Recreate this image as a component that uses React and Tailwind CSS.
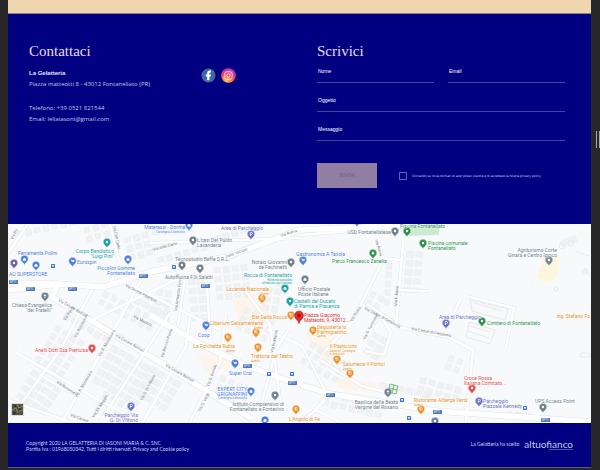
import React from "react";

const BLUE = "#4d7fe0";
const ORANGE = "#e8912a";
const GREEN = "#2b934a";
const TEAL = "#1aa3a3";
const GRAY = "#6f828c";
const PURPLE = "#6a74c4";
const RED = "#e2504f";

const pins = [
  [24.5, 260, BLUE, "bag"], [14, 264, "#6b62a8", "dot"], [36, 266, BLUE, "bag"], [72.5, 262, BLUE, "cart"],
  [107, 243, TEAL, "dot"], [128, 260, BLUE, "bag"], [45, 297, GRAY, "cross"], [189, 226, BLUE, "bag"],
  [251, 235, PURPLE, "p"], [193, 241, GRAY, "dot"], [182, 266, GRAY, "dot"], [200, 269, GRAY, "dot"],
  [291, 263, GRAY, "dot"], [285, 289, TEAL, "bag"], [262, 299, ORANGE, "fork"], [290, 302, TEAL, "dot"],
  [291, 316, ORANGE, "fork"], [256, 333, ORANGE, "fork"], [206, 326, BLUE, "cart"], [357, 222, PURPLE, "p"],
  [395, 232, GRAY, "dot"], [407, 232, GREEN, "dot"], [423, 244, GREEN, "dot"], [303, 261, BLUE, "cart"],
  [373, 254, GREEN, "tree"], [305, 280, GRAY, "bag"], [446, 324, PURPLE, "p"], [549, 261, GRAY, "dot"],
  [482, 322, GREEN, "dot"], [92, 349, RED, "dot"], [131, 407, PURPLE, "p"], [228, 338, ORANGE, "fork"],
  [258, 348, ORANGE, "fork"], [235, 364, BLUE, "cart"], [251, 392, BLUE, "bag"], [275, 396, GRAY, "dot"],
  [296, 410, ORANGE, "fork"], [265, 421, BLUE, "bag"], [313, 331, ORANGE, "fork"], [337, 360, ORANGE, "fork"],
  [350, 374, ORANGE, "fork"], [388, 393, GRAY, "cross"], [421, 410, ORANGE, "fork"], [435, 422, GRAY, "dot"],
  [472, 389, RED, "dot"], [479, 402, PURPLE, "p"], [543, 408, GRAY, "dot"],
];

// x, y, anchor, colour, lines, small lines
const places = [
  [18, 255, "start", BLUE, ["Ferramenta Polini"]],
  [9, 276, "start", BLUE, ["AO SUPERSTORE"]],
  [77, 264, "start", BLUE, ["Eurospin"]],
  [114, 253, "end", TEAL, ["Corpo Bandistico", "\"Luigi Pini\""]],
  [135, 270, "end", BLUE, ["Piccolini Gomme", "Fontanellato"]],
  [52, 307, "end", GRAY, ["Chiesa Evangelica", "\"dei Fratelli\""]],
  [185, 229, "end", BLUE, ["Materassi - Dorma"], ["Consegna a domicilio"]],
  [221, 230, "start", PURPLE, ["Area di Parcheggio"]],
  [197, 242, "start", GRAY, ["L'oasi Del Pulito", "Lavanderia"]],
  [175, 261, "start", GRAY, ["Tecnostudio Beffe S.R.L."]],
  [165, 279, "start", GRAY, ["Autofficina F.lli Saletti"]],
  [287, 264, "end", GRAY, ["Notaio Giovanni", "de Fachinetti"]],
  [292, 277, "end", TEAL, ["Rocca di Fontanellato"], ["Fortezza custodita", "affrescata con fossato"]],
  [269, 291, "end", ORANGE, ["Locanda Nazionale"], ["Aperto"]],
  [294, 303, "start", TEAL, ["Castelli del Ducato", "di Parma e Piacenza"]],
  [287, 319, "end", ORANGE, ["Bar Della Rocca"]],
  [304, 317, "start", "#d92b2b", ["Piazza Giacomo", "Matteotti, 9, 43012..."]],
  [263, 325, "end", ORANGE, ["Cibarium Salsamenteria"], ["Aperto"]],
  [198, 337, "start", BLUE, ["Coop"]],
  [391, 234, "end", GRAY, ["USD Fontanellatese"]],
  [400, 228, "start", GREEN, ["Piscina Fontanellato"]],
  [428, 245, "start", GREEN, ["Piscina comunale", "Fontanellato"]],
  [296, 256, "start", BLUE, ["Gastronomia A Tavola"]],
  [332, 263, "start", GREEN, ["Parco Francesco Zanella"]],
  [298, 291, "start", GRAY, ["Ufficio Postale", "Poste Italiane"]],
  [439, 319, "start", PURPLE, ["Area di Parcheggio"]],
  [557, 252, "end", GRAY, ["Agriturismo Corte", "Ginara e Centro Ippico"]],
  [487, 325, "start", GREEN, ["Cimitero di Fontanellato"]],
  [590, 318, "end", ORANGE, ["Ing. Stefano Fo"]],
  [88, 352, "end", RED, ["Anelli Dott.Ssa Pierluisa"]],
  [138, 417, "end", PURPLE, ["Parcheggio Via", "G. Di Vittorio"]],
  [235, 348, "end", ORANGE, ["La Forchetta Rubia"], ["Aperto"]],
  [251, 358, "start", ORANGE, ["Trattoria del Teatro"], ["Aperto"]],
  [229, 375, "start", BLUE, ["Super Crai"]],
  [247, 391, "end", BLUE, ["EXPERT CITY", "GRIGNAFFINI"], ["Consegna a domicilio"]],
  [284, 406, "end", GRAY, ["Istituto Comprensivo di", "Fontanellato e Fontevivo"]],
  [289, 421, "start", ORANGE, ["L'Angolo di Fe"]],
  [317, 329, "start", ORANGE, ["Degusteria lo", "Parmigianino"], ["Aperto"]],
  [330, 348, "start", ORANGE, ["Il Pasticcino"], ["Asporto, Consegna", "a domicilio"]],
  [343, 366, "start", ORANGE, ["Salumeria Il Portici"], ["Aperto"]],
  [398, 404, "end", GRAY, ["Basilica della Beata", "Vergine del Rosario"]],
  [414, 402, "start", ORANGE, ["Ristorante Alberga Verdi"], ["Aperto"]],
  [464, 380, "start", RED, ["Croce Rossa", "Italiana Comitato..."]],
  [483, 403, "start", PURPLE, ["Parcheggio", "Piazzale Kennedy"]],
  [535, 403, "start", GRAY, ["UPS Access Point"]],
];

const streets = [
  [113, 226, 78, "Via Don Carlo"], [58, 301, 30, "Via Cesare Battisti"], [115, 336, 30, "Via Cesare Battisti"],
  [165, 366, 30, "Via Cesare Battisti"], [125, 286, 28, "Via Donne Albertoni"], [133, 317, 28, "Via Mazzini"],
  [153, 251, -15, "Via Aldo Carlo"], [226, 258, -20, "Viale Vaccari"], [281, 237, -18, "Via Roma"],
  [177, 311, -82, "Via Armando Frova"], [375, 240, 72, "Via Roma"], [352, 322, -58, "Via Roma"],
  [364, 309, 28, "Via Caduti di Cefalonia"], [397, 306, -86, "Via F. Bassi"], [411, 330, 10, "Via Caduti di Cefalonia"],
  [76, 338, -62, "Via Boccaccini"], [100, 357, -60, "Via A. Montanara"], [77, 398, -60, "Via A. Montanara"],
  [56, 383, 32, "Via Bonomelli"], [94, 418, -58, "Via XX Maggio"], [65, 321, -55, "Via Rossi"],
  [70, 416, 20, "Via Cavour"], [142, 401, -62, "Via G. Di Vittorio"], [163, 358, -72, "Via Bernini Paola"],
  [209, 387, -70, "Via G. Donati"], [200, 412, -62, "Via G. Verdi"],
  [273, 353, -78, "Via Pozzarini"], [365, 340, -62, "Via S. Tommaso"], [13, 240, -65, "Via Po"],
];

const mainRoads = [
  "M8 290 L58 284 L104 287 L150 272 L226 257 L300 230 L410 225",
  "M8 283 L58 284 L52 297 L150 356 L252 419",
  "M150 315 L200 344 L247 366 L292 382 L330 394 L437 411 L591 422",
];

const roads = [
  "M203 272 L207 286 L211 348", "M178 325 L186 272", "M110 224 L120 265 L109 286", "M28 224 L8 253",
  "M8 422 L60 350 L92 290", "M62 422 L125 310 L141 280", "M100 422 L170 313", "M143 422 L186 346 L190 318",
  "M8 400 L70 422", "M15 352 L95 398 L140 422", "M40 375 L70 392", "M92 320 L200 268", "M124 282 L220 330",
  "M300 235 L376 229 L383 260 L352 322 L326 350", "M367 304 L402 328 L448 337 L473 350 L466 422",
  "M404 232 L396 326", "M381 258 L402 260", "M395 290 L430 291", "M365 342 L379 314 L391 332", "M391 332 L384 355 L365 351",
  "M190 422 L220 362 L226 315", "M262 402 L276 350 L288 330", "M268 330 L302 346 L325 390", "M245 290 L270 325 L280 400",
  "M150 243 L300 238", "M320 360 L362 386 L400 396", "M315 410 L330 394", "M300 422 L316 410 L340 422",
  "M466 296 L514 308 L506 346 M450 322 L460 300",
];

// x, y, rotation, columns, rows of house footprints
const blocks = [
  [16, 232, -12, 7, 1], [84, 228, -15, 3, 2], [124, 238, -15, 3, 3], [152, 229, -8, 4, 1], [157, 258, -16, 6, 1],
  [105, 291, 28, 7, 2], [70, 305, 30, 6, 2], [140, 289, 28, 4, 2], [157, 290, 5, 2, 4], [188, 280, -6, 2, 5],
  [214, 268, -6, 4, 4], [214, 237, -18, 6, 1], [57, 325, 32, 4, 5], [38, 362, 32, 4, 5], [113, 345, 30, 6, 5],
  [105, 391, 30, 4, 3], [152, 366, 30, 4, 4], [222, 375, 25, 4, 3], [246, 307, 25, 4, 3], [268, 278, 10, 2, 4],
  [312, 342, 30, 5, 3], [325, 391, 12, 7, 2], [380, 382, 12, 6, 1], [387, 263, 4, 1, 5], [372, 291, 28, 2, 2],
  [407, 251, 5, 2, 5], [374, 332, 28, 2, 3], [450, 355, 22, 2, 2], [421, 377, 15, 5, 2],
  [507, 411, 6, 3, 1], [560, 242, -24, 2, 1], [582, 270, -18, 1, 1],
];

function Pin({ x, y, color, glyph }) {
  return (
    <g transform={`translate(${x} ${y})`}>
      <path d="M0 5.200 C-.5 2.700 -3.800 2 -3.800 -1 A3.800 3.800 0 0 1 3.800 -1 C3.800 2 .5 2.700 0 5.200Z" fill={color} stroke="#fff" strokeWidth=".4" />
      {glyph === "dot" && <circle cy="-1" r="1.2" fill="#fff" />}
      {glyph === "bag" && <path d="M-1.5 -1.3H1.5V.7H-1.5Z M-.8 -1.3V-2.1H.8V-1.3" fill="#fff" />}
      {glyph === "cart" && <path d="M-1.9 -2.3H-1.2L-.6 -.3H1.3L1.7 -1.7H-1" fill="#fff" stroke="#fff" strokeWidth=".4" />}
      {glyph === "fork" && <path d="M-.8 -2.6V1 M-1.4 -2.6V-1.3H-.2V-2.6 M1 1V-2.6" fill="none" stroke="#fff" strokeWidth=".6" />}
      {glyph === "p" && <path d="M-.7 1V-2.6H.4A1 1 0 0 1 .4 -.5H-.7" fill="none" stroke="#fff" strokeWidth=".7" />}
      {glyph === "cross" && <path d="M0 -2.8V1M-1.2 -1.5H1.2" stroke="#fff" strokeWidth=".8" />}
      {glyph === "tree" && <path d="M0 -3L1.6 0H-1.6ZM-.3 0H.3V1H-.3Z" fill="#fff" />}
    </g>
  );
}

function Map() {
  return (
    <svg
      role="img"
      aria-label="Mappa di Fontanellato"
      viewBox="8 224 583 199"
      preserveAspectRatio="xMidYMid slice"
      className="block h-[199px] w-full bg-[#f8f9fb] font-['Roboto',sans-serif]"
    >
      <path d="M409 224H439V235L409 236Z" fill="#cdebd0" />
      <path d="M544 258L559 256L557 275L549 283L537 278Z" fill="#fdf6dc" />
      <path d="M198 355L232 352L240 366L205 372ZM305 335L326 322L340 345L326 366ZM336 378L380 383L378 392L338 388ZM232 300L262 292L275 325L240 325Z" fill="#fdf5ec" />
      {blocks.map(([x, y, r, cols, rows]) => (
        <g key={`${x}-${y}`} transform={`translate(${x} ${y}) rotate(${r})`}>
          {Array.from({ length: cols * rows }, (_, i) => (
            <rect
              key={i}
              x={(i % cols) * 9}
              y={Math.floor(i / cols) * 9}
              width={5 + ((i * 3 + x) % 3)}
              height={5 + ((i + y) % 2)}
              fill="#f0f1f3"
              stroke="#e8eaed"
              strokeWidth=".5"
            />
          ))}
        </g>
      ))}
      <g fill="none" strokeLinejoin="round">
        <path d={roads.join(" ")} stroke="#e3e5e9" strokeWidth="3.5" />
        <path d={mainRoads.join(" ")} stroke="#e1e3e8" strokeWidth="6.500" />
        <path d={roads.join(" ")} stroke="#fff" strokeWidth="2.6" />
        <path d={mainRoads.join(" ")} stroke="#fff" strokeWidth="5.500" />
      </g>
      <g fill="none" stroke="#e7e9ec">
        <path d="M470 300L508 309L505 320L472 311Z M469 322L495 330L490 344L466 337Z M474 303L503 311M470 326L490 332M468 331L489 338" />
        <circle cx="571" cy="243" r="3" /><circle cx="562" cy="246" r="3" /><circle cx="556" cy="289" r="2" />
        <path d="M576 251l13 5M584 268l6 8M547 233v1M532 283v1M554 347v1M549 362v1M541 383v1M581 353h9v4h-9z" />
      </g>
      <path d="M390 384L398 386L396 394L388 392ZM394 385L392 393M389 388L397 390" fill="#e3f3e2" stroke="#5faf74" strokeWidth=".8" />

      <g fill="#7b818b">
        {streets.map(([x, y, r, name]) => (
          <text key={`${x}-${y}`} transform={`translate(${x} ${y}) rotate(${r})`} className="text-[4px]">{name}</text>
        ))}
      </g>

      {[[13, 282], [30, 289], [72, 289], [143, 276], [205, 286], [247, 366], [292, 383], [330, 395], [437, 412], [545, 420]].map(([x, y]) => (
        <g key={`${x}-${y}`}>
          <rect x={x - 4} y={y - 2} width="9" height="4" rx=".6" fill="#4a77bd" />
          <text x={x} y={y + 1} textAnchor="middle" fill="#fff" className="text-[3px]">SP11</text>
        </g>
      ))}
      {[[53, 266], [174, 267], [269, 374], [292, 374], [402, 400], [409, 418], [525, 408]].map(([x, y]) => (
        <g key={`${x}-${y}`}>
          <rect x={x - 2} y={y - 2} width="4" height="4" rx=".6" fill="#3c78dc" />
          <rect x={x - 1} y={y - 1} width="2" height="1.6" fill="#dce9ff" />
        </g>
      ))}

      {pins.map(([x, y, color, glyph]) => (
        <Pin key={`${x}-${y}`} x={x} y={y} color={color} glyph={glyph} />
      ))}
      {places.map(([x, y, anchor, color, lines, small = []]) => (
        <text key={`${x}-${y}`} textAnchor={anchor} fill={color} stroke="#fff" strokeWidth=".5" paintOrder="stroke" className="text-[5px]">
          {lines.map((line, i) => (
            <tspan key={line} x={x} y={y + i * 4.5}>{line}</tspan>
          ))}
          {small.map((line, i) => (
            <tspan key={line} x={x} y={y + (lines.length - 1) * 4.5 + 3.5 + i * 3.5} className="text-[3px]">{line}</tspan>
          ))}
        </text>
      ))}
      <path d="M299 324C298.500 320 294.500 319.500 294.500 315.500A4.500 4.500 0 0 1 303.500 315.500C303.500 319.500 299.500 320 299 324Z" fill="#e02b27" stroke="#b31412" strokeWidth=".4" />
      <circle cx="299" cy="315.500" r="1.500" fill="#8d1111" />

      <rect x="11.500" y="403.500" width="12" height="12" fill="#565447" stroke="#fff" strokeWidth=".6" />
      <path d="M12 410l4-2 2 5M17 404l2 4 4-2M19 411l4-1" stroke="#8a8069" fill="none" />
      <path d="M14 405h2v2h-2zM19 408h2v2h-2zM13 412h3v2h-3z" fill="#33382f" />
    </svg>
  );
}

function Field({ id, label, type = "text" }) {
  return (
    <div className="flex flex-col border-b border-[#4444a4]">
      <label htmlFor={id} className="pl-px font-['Liberation_Sans',sans-serif] text-[5px] leading-[8px] text-white">{label}</label>
      <input id={id} type={type} className="h-[7px] w-full bg-transparent text-[5px] text-white outline-none" />
    </div>
  );
}

function Facebook() {
  return (
    <svg viewBox="0 0 15 15" className="size-[15px]" aria-hidden="true">
      <circle cx="7.5" cy="7.5" r="7" fill="#3f67a5" />
      <path d="M6.200 12.200V8.400H4.800V6.400H6.200V5.100C6.200 3.500 7.200 2.600 8.700 2.600H10V4.500H9.200C8.600 4.500 8.400 4.800 8.400 5.300V6.400H10L9.700 8.400H8.400V12.200Z" fill="#fff" />
    </svg>
  );
}

function Instagram() {
  return (
    <svg viewBox="0 0 15 15" className="size-[15px]" aria-hidden="true">
      <defs>
        <radialGradient id="insta" cx=".3" cy="1" r="1">
          <stop offset="0" stopColor="#ffd35a" />
          <stop offset=".35" stopColor="#fb8a45" />
          <stop offset=".65" stopColor="#e93a72" />
          <stop offset="1" stopColor="#b23bc0" />
        </radialGradient>
      </defs>
      <circle cx="7.500" cy="7.500" r="7.300" fill="url(#insta)" />
      <rect x="3.800" y="3.800" width="7.400" height="7.400" rx="2" fill="none" stroke="#ffe6ea" strokeWidth=".9" />
      <circle cx="7.500" cy="7.500" r="1.700" fill="none" stroke="#ffe6ea" strokeWidth=".9" />
      <circle cx="9.700" cy="5.300" r=".5" fill="#ffe6ea" />
    </svg>
  );
}

export default function App() {
  return (
    <div className="flex min-h-screen bg-[#272727] pl-2 font-['Open_Sans',sans-serif]">
      <div className="flex min-w-0 flex-1 flex-col">
        <div className="h-[14px] border-b border-[#8d7f8c] bg-[#f0d6ae]" />

        <section className="grid grid-cols-[288fr_248fr] bg-[#000080] pt-[27px] pr-[26px] pb-9 pl-[21px] text-[#c4c4e6]">
          <div>
            <h2 className="font-['Liberation_Serif',serif] text-[15px] leading-5 text-[#e8dce0]">Contattaci</h2>
            <div className="flex pt-[7px]">
              <div className="w-[172px] text-[6px] leading-[11px]">
                <p className="font-['Liberation_Sans',sans-serif] font-bold text-[#e6e6f6]">La Gelatteria</p>
                <p>Piazza matteotti 8 - 43012 Fontanellato (PR)</p>
                <p className="pt-[13px]">Telefono: +39 0521 821544</p>
                <p>Email: <a href="mailto:lellaiasoni@gmail.com">lellaiasoni@gmail.com</a></p>
              </div>
              <div className="flex gap-[5px]">
                <a href="#facebook" aria-label="Facebook"><Facebook /></a>
                <a href="#instagram" aria-label="Instagram"><Instagram /></a>
              </div>
            </div>
          </div>

          <form>
            <h2 className="font-['Liberation_Serif',serif] text-[15px] leading-5 text-[#e8dce0]">Scrivici</h2>
            <div className="flex flex-col gap-[13px] pt-[6px]">
              <div className="grid grid-cols-2 gap-[14px]">
                <Field id="nome" label="Nome" />
                <Field id="email" label="Email" type="email" />
              </div>
              <Field id="oggetto" label="Oggetto" />
              <Field id="messaggio" label="Messaggio" />
            </div>
            <div className="flex items-center gap-[22px] pt-[22px]">
              <button type="button" className="h-[25px] w-[60px] shrink-0 bg-[#907fa2] font-['Liberation_Sans',sans-serif] text-[6px] text-[#6c5c8a]">INVIA</button>
              <div className="flex items-center gap-[5px] pt-px">
                <input id="privacy" type="checkbox" className="size-2 shrink-0 appearance-none border border-[#5f5fba]" />
                <label htmlFor="privacy" className="font-['DejaVu_Sans',sans-serif] text-[3px] leading-[5px] whitespace-nowrap text-[#dcdcf4]">
                  Cliccando su invia dichiari di aver preso visione e di accettare la nostra privacy policy
                </label>
              </div>
            </div>
          </form>
        </section>

        <Map />

        <footer className="flex h-[45px] items-center justify-between border-b border-[#5c5c86] bg-[#000080] pr-[18px] pl-[18px] font-['Lato',sans-serif] text-[5px] text-[#d0d0ec]">
          <div className="pt-px leading-[6px]">
            <p>Copyright 2020 LA GELATTERIA DI IASONI MARIA &amp; C. SNC</p>
            <p>Partita Iva : 01968050342. Tutti i diritti riservati. <a href="#privacy">Privacy and Cookie policy</a></p>
          </div>
          <div className="flex items-center gap-[5px]">
            <span>La Gelatteria ha scelto</span>
            <a href="#altuofianco" className="flex flex-col items-end text-[10px] leading-[9px] text-[#c8c8e8]">
              altuofianco
              <span className="h-px w-6 bg-[#5050a4]" />
            </a>
          </div>
        </footer>
      </div>

      <div className="flex w-[9px] shrink-0 justify-end gap-[2px] pt-[131px]">
        <span className="h-[17px] w-px bg-[#a8a8a8]" />
        <span className="h-[17px] w-px bg-[#a8a8a8]" />
      </div>
    </div>
  );
}
